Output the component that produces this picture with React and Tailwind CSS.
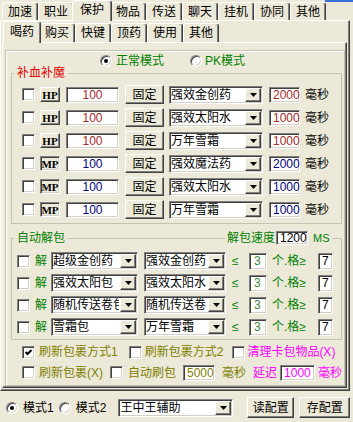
import React from 'react';

const SUNK =
  'border border-t-[#808080] border-l-[#808080] border-b-white border-r-white shadow-[inset_1px_1px_0_#404040,inset_-1px_-1px_0_#d4d0c8]';
const RAISED =
  'border border-t-white border-l-white border-b-[#404040] border-r-[#404040] shadow-[inset_-1px_-1px_0_#808080]';
const TAB =
  'flex items-center justify-center rounded-t-[3px] border-l border-t border-r border-l-white border-t-white border-r-[#404040] bg-[#ECE9D8] shadow-[inset_-1px_0_0_#808080]';

function Check({ on }) {
  return (
    <div className={`flex h-[13px] w-[13px] shrink-0 items-center justify-center bg-white ${SUNK}`}>
      {on && (
        <svg width="9" height="9" viewBox="0 0 9 9">
          <polyline points="1.5,4 3.5,6 7.5,2" fill="none" stroke="#000" strokeWidth="2" />
        </svg>
      )}
    </div>
  );
}

function Radio({ on }) {
  return (
    <div className="flex h-[12px] w-[12px] shrink-0 items-center justify-center rounded-full border border-t-[#808080] border-l-[#808080] border-b-white border-r-white bg-white shadow-[inset_1px_1px_0_#404040,inset_-1px_-1px_0_#d4d0c8]">
      {on && <div className="h-[4px] w-[4px] rounded-full bg-black" />}
    </div>
  );
}

function Combo({ text, className }) {
  return (
    <div className={`flex shrink-0 bg-white ${SUNK} ${className}`}>
      <div className="min-w-0 flex-1 self-center overflow-hidden whitespace-nowrap pl-[1px] leading-[14px]">{text}</div>
      <div className={`m-[1px] flex w-[16px] shrink-0 items-center justify-center bg-[#ECE9D8] ${RAISED}`}>
        <svg width="7" height="4" viewBox="0 0 7 4">
          <path d="M0 0h7L3.5 4z" fill="#000" />
        </svg>
      </div>
    </div>
  );
}

const topTabs = ['加速', '职业', '保护', '物品', '传送', '聊天', '挂机', '协同', '其他'];
const subTabs = ['喝药', '购买', '快键', '顶药', '使用', '其他'];

const hpRows = [
  { t: 'HP', item: '强效金创药', ms: '2000' },
  { t: 'HP', item: '强效太阳水', ms: '1000' },
  { t: 'HP', item: '万年雪霜', ms: '1000' },
  { t: 'MP', item: '强效魔法药', ms: '2000' },
  { t: 'MP', item: '强效太阳水', ms: '1000' },
  { t: 'MP', item: '万年雪霜', ms: '1000' },
];

const unpackRows = [
  ['超级金创药', '强效金创药'],
  ['强效太阳包', '强效太阳水'],
  ['随机传送卷包', '随机传送卷'],
  ['雪霜包', '万年雪霜'],
];

export default function App() {
  return (
    <div className="relative h-[422px] w-[353px] overflow-hidden bg-[#ECE9D8] font-['Liberation_Sans','Noto_Sans_CJK_SC',sans-serif] text-[12px] leading-[14px] text-black">
      <div className="absolute right-0 top-0 h-[2px] w-[28px] bg-[#3a6fd8]" />

      {/* top tabs */}
      <div className="flex h-[20px] items-end pl-[2px]">
        {topTabs.map((t) =>
          t === '保护' ? (
            <div key={t} className={`relative z-10 -mx-[2px] -mb-[1px] h-[21px] w-[40px] pb-[2px] ${TAB}`}>
              {t}
            </div>
          ) : (
            <div key={t} className={`h-[18px] w-[36px] ${TAB}`}>
              {t}
            </div>
          )
        )}
      </div>

      <div className="h-[371px] w-[350px] border border-t-white border-l-white border-r-[#404040] border-b-[#404040] shadow-[inset_-1px_-1px_0_#808080]">
        {/* sub tabs */}
        <div className="flex h-[21px] items-end pl-[2px]">
          {subTabs.map((t, i) =>
            i === 0 ? (
              <div key={i} className={`relative z-10 -mr-[2px] -mb-[1px] h-[22px] w-[38px] pb-[2px] ${TAB}`}>
                {t}
              </div>
            ) : (
              <div key={i} className={`h-[19px] w-[36px] ${TAB}`}>
                {t}
              </div>
            )
          )}
        </div>

        <div className="ml-[1px] h-[346px] w-[345px] border border-t-white border-l-white border-r-[#404040] border-b-[#404040] shadow-[inset_-1px_-1px_0_#808080]">
          <div className="ml-[2px] mt-[7px] h-[336px] w-[340px] border border-[#c5c2b2] shadow-[inset_1px_1px_0_#fff]">
            {/* mode radios */}
            <div className="mt-[4px] flex h-[12px] items-center pl-[94px] text-[#008000]">
              <Radio on />
              <span className="ml-[4px]">正常模式</span>
              <div className="ml-[26px]">
                <Radio />
              </div>
              <span className="ml-[3px]">PK模式</span>
            </div>

            {/* 补血补魔 */}
            <fieldset className="ml-[5px] w-[331px] border border-[#c5c2b2] pb-[2px]">
              <legend className="ml-[2px] px-[3px] leading-[12px] text-[#e00000]">补血补魔</legend>
              <div className="pl-[10px] pt-[4px]">
                {hpRows.map((r, i) => {
                  const col = r.t === 'HP' ? 'text-[#a52a2a]' : 'text-[#000080]';
                  return (
                    <div key={i} className="flex h-[23px] items-center">
                      <Check />
                      <div
                        className={`ml-[5px] flex h-[15px] w-[20px] shrink-0 items-center justify-center font-['Liberation_Serif',serif] text-[11px] font-bold ${
                          r.t === 'HP' ? RAISED : SUNK
                        }`}
                      >
                        {r.t}
                      </div>
                      <div className={`ml-[6px] flex h-[16px] w-[53px] shrink-0 items-center justify-center bg-white ${SUNK} ${col}`}>100</div>
                      <div className={`ml-[6px] flex h-[19px] w-[39px] shrink-0 items-center justify-center ${RAISED}`}>固定</div>
                      <Combo text={r.item} className="ml-[5px] h-[18px] w-[94px]" />
                      <div className={`ml-[6px] flex h-[16px] w-[31px] shrink-0 items-center bg-white pl-[3px] ${SUNK} ${col}`}>{r.ms}</div>
                      <span className="ml-[5px]">毫秒</span>
                    </div>
                  );
                })}
              </div>
            </fieldset>

            {/* 自动解包 */}
            <div className="relative ml-[5px] mt-[8px] w-[331px]">
              <fieldset className="border border-[#c5c2b2] pb-[1px]">
                <legend className="ml-[2px] px-[3px] leading-[12px] text-[#008000]">自动解包</legend>
                <div className="pl-[5px] pt-[6px]">
                  {unpackRows.map((r, i) => (
                    <div key={i} className="flex h-[22px] items-center">
                      <Check />
                      <span className="ml-[5px] text-[#008000]">解</span>
                      <Combo text={r[0]} className="ml-[4px] h-[18px] w-[87px]" />
                      <Combo text={r[1]} className="ml-[6px] h-[18px] w-[82px]" />
                      <span className="ml-[6px] w-[10px] text-[#008000]">≤</span>
                      <div className={`ml-[7px] flex h-[17px] w-[18px] shrink-0 items-center bg-white pl-[4px] text-[#3a8a3a] ${SUNK}`}>3</div>
                      <span className="ml-[5px] w-[46px] text-[#008000]">个.格≥</span>
                      <div className={`flex h-[17px] w-[15px] shrink-0 items-center bg-white pl-[3px] ${SUNK}`}>7</div>
                    </div>
                  ))}
                </div>
              </fieldset>
              <div className="absolute left-[214px] top-[-1px] flex h-[14px] items-center bg-[#ECE9D8] px-[2px] text-[#008000]">
                <span>解包速度</span>
                <div className={`ml-[1px] flex h-[14px] w-[32px] items-center bg-white pl-[3px] text-black ${SUNK}`}>1200</div>
                <span className="ml-[5px] text-[11px]">MS</span>
              </div>
            </div>

            {/* refresh options */}
            <div className="mt-[2px] flex h-[20px] items-center pl-[16px]">
              <Check on />
              <span className="ml-[4px] text-[#808000]">刷新包裹方式1</span>
              <div className="ml-[11px]">
                <Check />
              </div>
              <span className="ml-[3px] text-[#808000]">刷新包裹方式2</span>
              <div className="ml-[9px]">
                <Check />
              </div>
              <span className="ml-[2px] text-[#ff00ff]">清理卡包物品(X)</span>
            </div>
            <div className="flex h-[21px] items-center pl-[16px]">
              <Check />
              <span className="ml-[4px] text-[#808000]">刷新包裹(X)</span>
              <div className="ml-[7px]">
                <Check />
              </div>
              <span className="ml-[5px] text-[#808000]">自动刷包</span>
              <div className={`ml-[7px] flex h-[16px] w-[32px] items-center bg-white pl-[3px] text-[#808000] ${SUNK}`}>5000</div>
              <span className="ml-[7px] text-[#808000]">毫秒</span>
              <span className="ml-[7px] text-[#ff00ff]">延迟</span>
              <div className={`ml-[3px] flex h-[16px] w-[35px] items-center bg-white pl-[3px] text-[#ff00ff] ${SUNK}`}>1000</div>
              <span className="ml-[3px] text-[#ff00ff]">毫秒</span>
            </div>
          </div>
        </div>
      </div>

      {/* bottom bar */}
      <div className="flex h-[31px] items-center pl-[6px] pt-[2px]">
        <Radio on />
        <span className="ml-[5px]">模式1</span>
        <div className="ml-[5px]">
          <Radio />
        </div>
        <span className="ml-[5px]">模式2</span>
        <Combo text="王中王辅助" className="ml-[12px] h-[18px] w-[115px]" />
        <div className={`ml-[14px] flex h-[21px] w-[47px] items-center justify-center ${RAISED}`}>读配置</div>
        <div className={`ml-[5px] flex h-[21px] w-[51px] items-center justify-center ${RAISED}`}>存配置</div>
      </div>
    </div>
  );
}
